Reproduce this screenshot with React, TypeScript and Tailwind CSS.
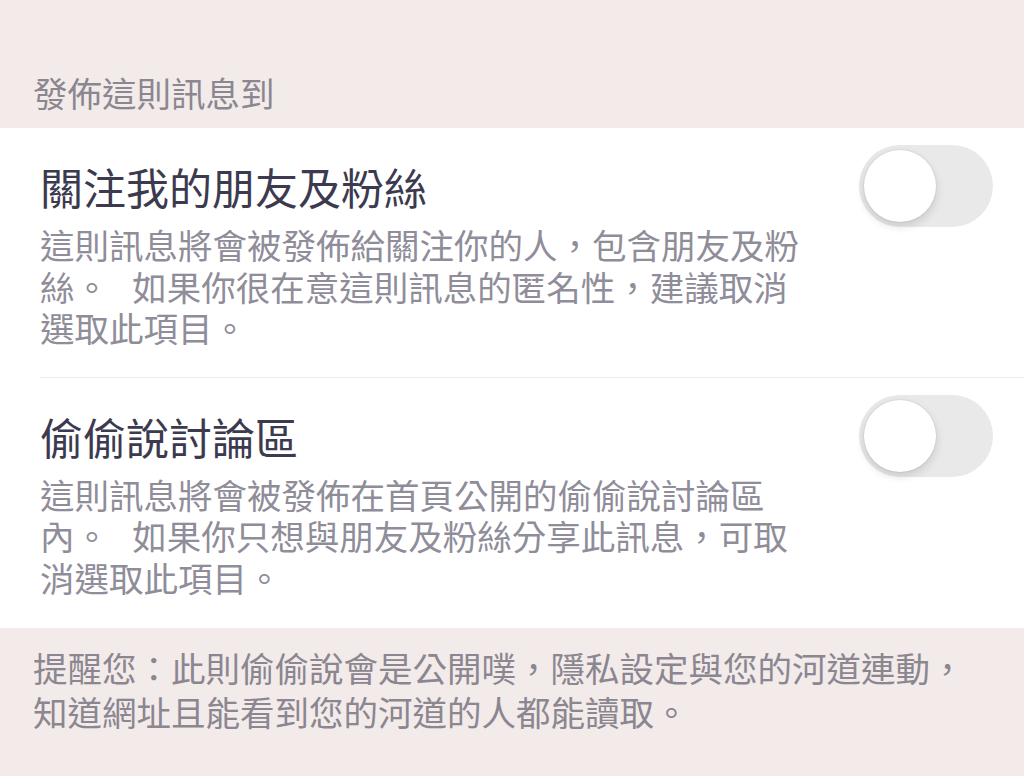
const font = { fontFamily: '"Noto Sans CJK TC", "Noto Sans CJK SC", sans-serif' };

function Toggle() {
  return (
    <div className="relative h-[82px] w-[134px] shrink-0 rounded-full bg-[#e9e9ea]">
      <div className="absolute left-[5px] top-[5px] h-[72px] w-[72px] rounded-full bg-white shadow-[0_4px_10px_rgba(0,0,0,0.14),0_0_0_1px_rgba(0,0,0,0.04)]" />
    </div>
  );
}

function OptionRow({ title, desc, divider }: { title: string; desc: string; divider?: boolean }) {
  return (
    <div className={"flex items-start justify-between pl-[40px] pr-[31px] pt-[17px] " + (divider ? "pb-[28px]" : "pb-[30px]")}>
      <div className="mt-[15px] flex flex-col">
        <div className="text-[43px] leading-[52px] text-[#3c3a4e]">{title}</div>
        <div className="mt-[12px] w-[770px] whitespace-pre-wrap text-[34.5px] leading-[41.5px] text-[#8f8d99]">{desc}</div>
      </div>
      <Toggle />
    </div>
  );
}

export default function App() {
  return (
    <div className="h-[776px] w-[1024px] overflow-hidden bg-[#f2ebea]" style={font}>
      <div className="h-[128px] pl-[33px] pt-[72px] text-[34.5px] leading-[41px] text-[#8b8690]">
        發佈這則訊息到
      </div>
      <div className="bg-white">
        <OptionRow
          title="關注我的朋友及粉絲"
          desc="這則訊息將會被發佈給關注你的人，包含朋友及粉絲。   如果你很在意這則訊息的匿名性，建議取消選取此項目。"
          divider
        />
        <div className="ml-[40px] h-px bg-[#efe9e8]" />
        <OptionRow
          title="偷偷說討論區"
          desc="這則訊息將會被發佈在首頁公開的偷偷說討論區內。   如果你只想與朋友及粉絲分享此訊息，可取消選取此項目。"
        />
      </div>
      <div className="pl-[33px] pr-[33px] pt-[17px] text-[34.5px] leading-[44px] text-[#8b8690]">
        提醒您：此則偷偷說會是公開噗，隱私設定與您的河道連動，知道網址且能看到您的河道的人都能讀取。
      </div>
    </div>
  );
}
